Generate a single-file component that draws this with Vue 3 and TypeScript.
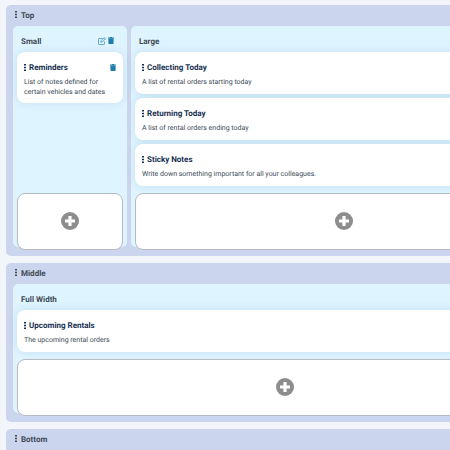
<script setup lang="ts">
interface Widget {
  title: string
  text: string
  removable?: boolean
}

interface Column {
  name: string
  editable?: boolean
  widgets: Widget[]
}

interface Row {
  name: string
  split?: boolean
  columns: Column[]
}

const rows: Row[] = [
  {
    name: 'Top',
    split: true,
    columns: [
      {
        name: 'Small',
        editable: true,
        widgets: [
          {
            title: 'Reminders',
            text: 'List of notes defined for certain vehicles and dates',
            removable: true,
          },
        ],
      },
      {
        name: 'Large',
        widgets: [
          { title: 'Collecting Today', text: 'A list of rental orders starting today' },
          { title: 'Returning Today', text: 'A list of rental orders ending today' },
          { title: 'Sticky Notes', text: 'Write down something important for all your colleagues.' },
        ],
      },
    ],
  },
  {
    name: 'Middle',
    columns: [
      {
        name: 'Full Width',
        widgets: [{ title: 'Upcoming Rentals', text: 'The upcoming rental orders' }],
      },
    ],
  },
  { name: 'Bottom', columns: [] },
]
</script>

<template>
  <main class="viewport">
    <div class="board">
      <section v-for="row in rows" :key="row.name" class="row">
        <h2 class="row-title">
          <svg class="grip" viewBox="0 0 2 7" aria-hidden="true">
            <path d="M0 0h2v1.5H0zM0 2.7h2v1.5H0zM0 5.4h2v1.5H0z" />
          </svg>
          {{ row.name }}
        </h2>
        <div class="columns" :class="{ split: row.split }">
          <section v-for="column in row.columns" :key="column.name" class="column">
            <header class="column-head">
              <h3>{{ column.name }}</h3>
              <div v-if="column.editable" class="tools">
                <button type="button" class="tool" aria-label="Edit column">
                  <svg class="edit" viewBox="0 0 16 16" aria-hidden="true">
                    <path d="M9 3H2.5Q1 3 1 4.5v9Q1 15 2.5 15h9q1.5 0 1.5-1.5V9" />
                    <path d="M6 7.5 12.5 1 15 3.5 8.5 10 5.5 10.5z" />
                    <path d="m11 2.5 2.5 2.5" />
                  </svg>
                </button>
                <button type="button" class="tool" aria-label="Delete column">
                  <svg class="trash" viewBox="0 0 14 16" aria-hidden="true">
                    <path d="M0 1h4.5l.5-1h4l.5 1H14v2.2H0zM1 4.2h12V14.5q0 1.5-1.5 1.5h-9Q1 16 1 14.5z" />
                  </svg>
                </button>
              </div>
            </header>
            <article v-for="widget in column.widgets" :key="widget.title" class="card">
              <header class="card-head">
                <h4>
                  <svg class="grip" viewBox="0 0 2 7" aria-hidden="true">
                    <path d="M0 0h2v1.5H0zM0 2.7h2v1.5H0zM0 5.4h2v1.5H0z" />
                  </svg>
                  {{ widget.title }}
                </h4>
                <button v-if="widget.removable" type="button" class="tool" aria-label="Delete widget">
                  <svg class="trash" viewBox="0 0 14 16" aria-hidden="true">
                    <path d="M0 1h4.5l.5-1h4l.5 1H14v2.2H0zM1 4.2h12V14.5q0 1.5-1.5 1.5h-9Q1 16 1 14.5z" />
                  </svg>
                </button>
              </header>
              <p>{{ widget.text }}</p>
            </article>
            <button type="button" class="add" aria-label="Add widget">
              <svg viewBox="0 0 18 18" aria-hidden="true">
                <circle cx="9" cy="9" r="9" />
                <path d="M7.4 4h3.2v3.4H14v3.2h-3.4V14H7.4v-3.4H4V7.4h3.4z" />
              </svg>
            </button>
          </section>
        </div>
      </section>
    </div>
  </main>
</template>

<style>
body {
  margin: 0;
  background: #f2f5fa;
}
</style>

<style scoped>
.viewport {
  height: 100vh;
  overflow: hidden;
  font-family: Roboto, "Liberation Sans", sans-serif;
  text-rendering: geometricPrecision;
  color: #414b57;
}

.board {
  box-sizing: border-box;
  min-width: 570px;
  padding: 5px 6px;
  display: flex;
  flex-direction: column;
  gap: 7px;
}

h2,
h3,
h4,
p {
  margin: 0;
}

h2,
h3,
h4 {
  font-size: 8px;
  line-height: 10px;
  font-weight: 700;
}

.row {
  padding: 0 7px 9px;
  border-radius: 5px;
  background: #cbd5ed;
}

.row-title {
  height: 21px;
  padding-left: 2px;
  display: flex;
  align-items: center;
  gap: 4px;
}

.grip {
  width: 2px;
  height: 7px;
  margin-bottom: 2px;
  flex: none;
  fill: currentColor;
}

.columns {
  display: grid;
  gap: 4px;
}

.split {
  grid-template-columns: 114px 1fr;
}

.column {
  padding: 0 4px;
  display: flex;
  flex-direction: column;
  gap: 4px;
  border-radius: 5px;
  background: #def4ff;
}

.column-head {
  height: 22px;
  padding: 10px 9px 0 4px;
  box-sizing: border-box;
  display: flex;
  align-items: center;
  justify-content: space-between;
}

.tools {
  display: flex;
  gap: 2px;
}

.tool {
  margin-bottom: 2px;
  padding: 0;
  border: 0;
  background: none;
  display: flex;
  cursor: pointer;
}

.edit {
  width: 8px;
  height: 8px;
  fill: none;
  stroke: #3a8fb8;
  stroke-width: 1.5;
}

.trash {
  width: 6px;
  height: 7px;
  fill: #1f7bab;
}

.card {
  box-sizing: border-box;
  min-height: 42px;
  padding: 11px 7px 6px;
  border-radius: 8px;
  background: #fff;
  box-shadow: 0 0 8px rgb(50 110 150 / 14%);
}

.card-head {
  display: flex;
  align-items: center;
  justify-content: space-between;
}

.card h4 {
  display: flex;
  align-items: center;
  gap: 3px;
  color: #152f50;
}

.card p {
  padding-top: 4px;
  font-size: 7px;
  line-height: 10px;
}

.add {
  height: 57px;
  margin: auto 0 -3px;
  padding: 0 0 1px;
  display: flex;
  align-items: center;
  justify-content: center;
  border: 1px solid #b5bbc0;
  border-radius: 8px;
  background: #fff;
  cursor: pointer;
}

.card:nth-last-child(2) {
  margin-bottom: 3px;
}

.add svg {
  width: 18px;
  height: 18px;
}

.add circle {
  fill: #8d8d8d;
}

.add path {
  fill: #fff;
}
</style>
